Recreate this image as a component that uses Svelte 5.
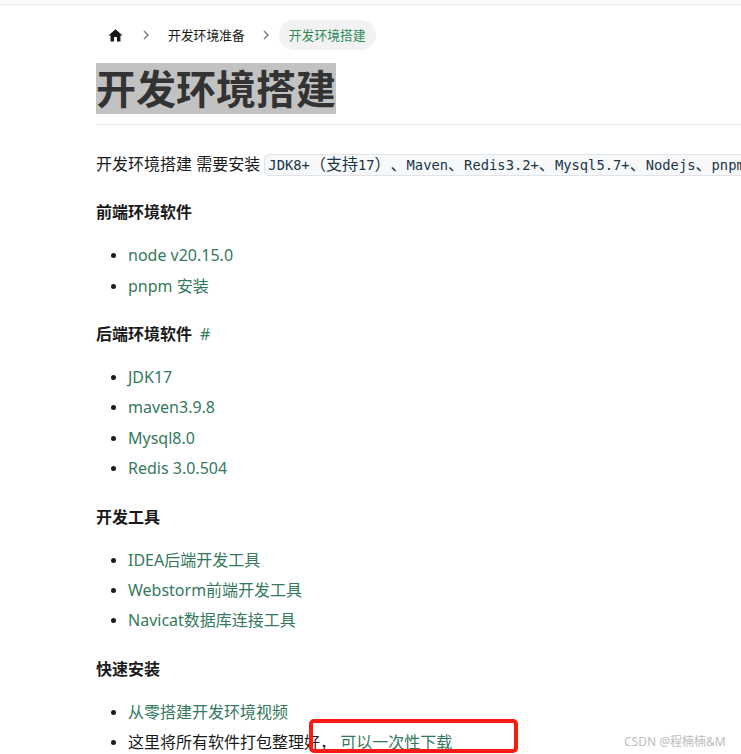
<script lang="ts">
	const groups = [
		{ title: '前端环境软件', items: ['node v20.15.0', 'pnpm 安装'] },
		{ title: '后端环境软件', anchor: true, items: ['JDK17', 'maven3.9.8', 'Mysql8.0', 'Redis 3.0.504'] },
		{ title: '开发工具', items: ['IDEA后端开发工具', 'Webstorm前端开发工具', 'Navicat数据库连接工具'] }
	];
</script>

<div class="page">
	<div class="topbar"></div>
	<nav class="crumbs">
		<a class="crumb home" href="#home" aria-label="首页">
			<svg width="17" height="17" viewBox="0 0 24 24"><path d="M10 20.5v-6.5h4v6.5h5v-8.5h3L12 3 2 12h3v8.5z" fill="#1a1a1a" /></svg>
		</a>
		<svg class="sep" width="12" height="12" viewBox="0 0 12 12"><path d="M4 2l4 4-4 4" fill="none" stroke="#808080" stroke-width="1.5" /></svg>
		<a class="crumb" href="#prep">开发环境准备</a>
		<svg class="sep" width="12" height="12" viewBox="0 0 12 12"><path d="M4 2l4 4-4 4" fill="none" stroke="#808080" stroke-width="1.5" /></svg>
		<a class="crumb current" href="#env">开发环境搭建</a>
	</nav>

	<h1><span class="picked">开发环境搭建</span></h1>

	<p class="intro">开发环境搭建 需要安装 <code>JDK8+<span class="wide">（支持</span>17<span class="wide">）、</span>Maven<span class="wide">、</span>Redis3.2+<span class="wide">、</span>Mysql5.7+<span class="wide">、</span>Nodejs<span class="wide">、</span>pnpm</code></p>

	{#each groups as g}
		<h3>{g.title}{#if g.anchor}<a class="anchor" href="#back">#</a>{/if}</h3>
		<ul>
			{#each g.items as item}
				<li><a href="#item">{item}</a></li>
			{/each}
		</ul>
	{/each}

	<h3>快速安装</h3>
	<ul>
		<li><a href="#video">从零搭建开发环境视频</a></li>
		<li>这里将所有软件打包整理好， <a href="#download">可以一次性下载</a></li>
	</ul>

	<div class="redbox"></div>
	<div class="mark">CSDN @程楠楠&amp;M</div>
</div>

<style>
	:global(body) {
		margin: 0;
		background: #fff;
		overflow: hidden;
	}
	.page {
		position: relative;
		box-sizing: border-box;
		width: 741px;
		height: 754px;
		overflow: hidden;
		padding-left: 96px;
		font-family: 'Noto Sans', 'Noto Sans CJK SC', sans-serif;
		font-size: 16px;
		color: #213547;
	}
	.topbar {
		height: 4px;
		margin-left: -96px;
		margin-bottom: 15px;
		background: #fafafa;
		border-bottom: 1px solid #e8e8e8;
	}
	.crumbs {
		display: flex;
		align-items: center;
		height: 30px;
		margin-bottom: 13px;
	}
	.crumb {
		display: block;
		padding: 0 10px;
		line-height: 30px;
		font-size: 12.8px;
		color: #1a1a1a;
		text-decoration: none;
		border-radius: 15px;
	}
	.home {
		display: flex;
		padding: 0 11px 0 11px;
	}
	.sep {
		flex: none;
		margin: 0 6px 0 5px;
	}
	.current {
		margin-left: 1px;
		background: #f2f2f2;
		color: #2e8b57;
	}
	h1 {
		margin: 0;
		padding-bottom: 10px;
		border-bottom: 1px solid #e8e8e8;
		font-size: 40px;
		line-height: 51px;
		font-weight: 700;
		color: #333;
	}
	.picked {
		display: inline-block;
		background: #c2c2c2;
		height: 51px;
	}
	.intro {
		height: 24px;
		margin: 26px 0 0;
		padding-bottom: 0.7px;
		line-height: 24px;
		white-space: nowrap;
		color: #1a1a1a;
	}
	code {
		font-family: 'DejaVu Sans Mono', 'Noto Sans CJK SC', monospace;
		font-size: 13.8px;
		padding: 2px 3px;
		background: #f6f8fa;
		border: 1px solid #e0e3e8;
		border-radius: 5px;
		color: #213547;
	}
	.wide {
		font-family: 'Noto Sans CJK SC', sans-serif;
		font-size: 16px;
		text-spacing-trim: space-all;
	}
	h3 {
		margin: 24.6px 0 0;
		font-size: 16px;
		line-height: 24px;
		font-weight: 700;
		color: #1a1a1a;
	}
	.anchor {
		margin-left: 8px;
		font-weight: 400;
		color: #2e7d5b;
		text-decoration: none;
	}
	ul {
		margin: 19px 0 0;
		padding: 0 0 0 32px;
		color: #1a1a1a;
	}
	li {
		height: 24px;
		line-height: 24px;
		margin-bottom: 6.3px;
	}
	li::marker {
		font-size: 14px;
	}
	li a {
		color: #35795c;
		text-decoration: none;
	}
	.redbox {
		position: absolute;
		left: 309px;
		top: 719px;
		width: 201px;
		height: 26px;
		border: 4px solid #fb1b13;
		border-radius: 5px;
	}
	.mark {
		position: absolute;
		left: 624px;
		top: 732px;
		font-size: 12px;
		color: #bdbdbd;
		white-space: nowrap;
	}
</style>
